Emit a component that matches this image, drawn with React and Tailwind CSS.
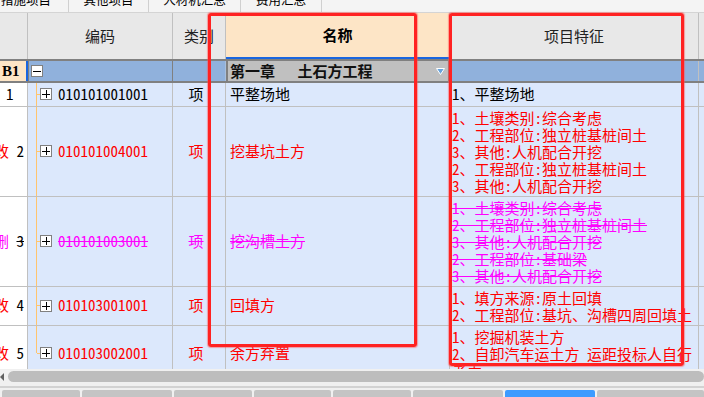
import React from "react";

const FONT = "font-['Noto_Sans_Mono_CJK_SC','Noto_Sans_CJK_SC',sans-serif]";

const TOP_TABS = [
  { label: "措施项目", w: "w-[69px]", cls: "justify-end pr-[17px]" },
  { label: "其他项目", w: "w-[80px]", cls: "justify-center" },
  { label: "人材机汇总", w: "w-[92px]", cls: "justify-center" },
  { label: "费用汇总", w: "w-[81px]", cls: "justify-center" },
];

const BOTTOM_TABS = [
  "w-[78px]", "w-[90px]", "w-[78px]", "w-[77px]", "w-[78px]", "w-[90px]", "w-[90px]", "flex-1",
];

const ROWS = [
  { mark: "", num: "1", code: "010101001001", tone: "normal", name: "平整场地", feats: ["1、平整场地"] },
  {
    mark: "改", num: "2", code: "010101004001", tone: "mod", name: "挖基坑土方",
    feats: [
      "1、土壤类别:综合考虑",
      "2、工程部位:独立桩基桩间土",
      "3、其他:人机配合开挖",
      "2、工程部位:独立桩基桩间土",
      "3、其他:人机配合开挖",
    ],
  },
  {
    mark: "删", num: "3", code: "010101003001", tone: "del", name: "挖沟槽土方",
    feats: [
      "1、土壤类别:综合考虑",
      "2、工程部位:独立桩基桩间土",
      "3、其他:人机配合开挖",
      "2、工程部位:基础梁",
      "3、其他:人机配合开挖",
    ],
  },
  {
    mark: "改", num: "4", code: "010103001001", tone: "mod", name: "回填方",
    feats: ["1、填方来源:原土回填", "2、工程部位:基坑、沟槽四周回填土"],
  },
  {
    mark: "改", num: "5", code: "010103002001", tone: "mod", name: "余方弃置",
    feats: ["1、挖掘机装土方", "2、自卸汽车运土方 运距投标人自行", "考虑"],
  },
];

const TONE = {
  normal: "text-black",
  mod: "text-[#ff0000]",
  del: "text-[#ff00ff] line-through decoration-[#ff00ff]",
};

function Box({ minus }) {
  return (
    <div className="w-[12px] h-[12px] shrink-0 border border-[#808080] bg-white flex items-center justify-center">
      <svg width="8" height="8" viewBox="0 0 8 8">
        <path d="M0 4.5H8" stroke="#000" strokeWidth="1" />
        {!minus && <path d="M4.5 0V8" stroke="#000" strokeWidth="1" />}
      </svg>
    </div>
  );
}

function DataRow({ r, last }) {
  const tone = TONE[r.tone];
  return (
    <div className="flex shrink-0">
      {/* row header */}
      <div
        className={
          "w-[28px] shrink-0 bg-white border-r border-b border-[#c0c0c0] flex items-center overflow-hidden whitespace-nowrap " +
          (r.mark ? "justify-end pr-[3px]" : "pl-[6px]")
        }
      >
        {r.mark && (
          <span className={r.tone === "del" ? "text-[#ff00ff]" : "text-[#ff0000]"}>{r.mark}&nbsp;</span>
        )}
        <span className={r.tone === "del" ? "text-black line-through" : "text-black"}>{r.num}</span>
      </div>
      {/* code */}
      <div className="w-[145px] shrink-0 bg-[#dce8fc] border-r border-b border-[#c0c0c0] flex items-stretch">
        <div className="w-[8px] shrink-0" />
        <div className="w-px shrink-0 flex flex-col">
          <div className={"bg-[#ffc46e] " + (last ? "h-1/2" : "flex-1")} />
        </div>
        <div className="flex items-center">
          <div className="w-[3px] h-px bg-[#ffc46e]" />
          <Box />
          <span className={"ml-[6px] " + tone}>{r.code}</span>
        </div>
      </div>
      {/* type */}
      <div className="w-[53px] shrink-0 bg-[#dce8fc] border-r border-b border-[#c0c0c0] flex items-center justify-center pr-[6px]">
        <span className={tone}>项</span>
      </div>
      {/* name */}
      <div className="w-[224px] shrink-0 bg-[#dce8fc] border-r border-b border-[#c0c0c0] flex items-center pl-[4px]">
        <span className={tone}>{r.name}</span>
      </div>
      {/* features */}
      <div className="w-[249px] shrink-0 bg-[#dce8fc] border-r border-b border-[#c0c0c0] pt-[2px] pb-[2px] pl-[2px] leading-[17px]">
        {r.feats.map((f, i) => (
          <div key={i} className="whitespace-nowrap">
            <span className={tone}>{f}</span>
          </div>
        ))}
      </div>
      <div className="flex-1 bg-[#dce8fc] border-b border-[#c0c0c0]" />
    </div>
  );
}

export default function App() {
  return (
    <div className={"relative w-[704px] h-[397px] overflow-hidden bg-[#f0f0f0] text-[15px] " + FONT}>
      {/* top tabs */}
      <div className="h-[13px] flex bg-[#f4f4f4] border-b border-[#d4d4d4] overflow-hidden text-[12.5px]">
        {TOP_TABS.map((t) => (
          <div key={t.label} className={"h-full flex items-start border-r border-[#d0d0d0] " + t.w + " " + t.cls}>
            <span className="block leading-[13px] -mt-[7px] whitespace-nowrap">{t.label}</span>
          </div>
        ))}
      </div>

      {/* table */}
      <div className="h-[356px] overflow-hidden flex flex-col">
        {/* header */}
        <div className="h-[46px] shrink-0 flex bg-[#e8e8e8] text-[#222]">
          <div className="w-[28px] shrink-0 border-r border-[#c0c0c0]" />
          <div className="w-[145px] shrink-0 border-r border-[#c0c0c0] flex items-center justify-center">编码</div>
          <div className="w-[53px] shrink-0 border-r border-[#c0c0c0] flex items-center justify-center">类别</div>
          <div className="w-[224px] shrink-0 border-r border-[#c0c0c0] bg-[#fde5c6] border-b-2 border-b-[#1a66e0] flex items-center justify-center font-bold text-black">
            名称
          </div>
          <div className="w-[249px] shrink-0 border-r border-[#c0c0c0] flex items-center justify-center">项目特征</div>
          <div className="flex-1" />
        </div>

        {/* B1 row */}
        <div className="h-[24px] shrink-0 flex border-y-2 border-[#808080] bg-[#90b1dc]">
          <div className="w-[28px] shrink-0 bg-[#fde5c6] border-r-2 border-[#1a66e0] flex items-center pl-[2px] font-['Liberation_Serif',serif] font-bold">
            B1
          </div>
          <div className="w-[145px] shrink-0 border-l border-r border-[#808080] flex items-center pl-[2px]">
            <Box minus />
          </div>
          <div className="w-[53px] shrink-0 border-r border-[#a9bfdc]" />
          <div className="w-[224px] shrink-0 bg-[#c0c0c0] border-x-2 border-[#808080] flex items-center pl-[2px] font-bold text-[#111]">
            <span className="whitespace-nowrap">第一章　 土石方工程</span>
            <svg className="ml-auto mr-[3px]" width="9" height="7" viewBox="0 0 9 7">
              <polygon points="0.5,0.5 8.5,0.5 4.5,6.5" fill="#6aa5dc" stroke="#ffffff" strokeWidth="1" />
            </svg>
          </div>
          <div className="w-[249px] shrink-0 border-r border-[#c0c0c0]" />
          <div className="flex-1" />
        </div>

        {ROWS.map((r, i) => (
          <DataRow key={r.num} r={r} last={i === ROWS.length - 1} />
        ))}
      </div>

      {/* horizontal scrollbar */}
      <div className="h-[21px] flex flex-col bg-[#f0f0f0]">
        <div className="h-[2px]" />
        <div className="h-[11px] flex items-center">
          <svg width="4" height="8" viewBox="0 0 4 8" className="shrink-0">
            <polygon points="4,0 4,8 0,4" fill="#606060" />
          </svg>
          <div className="ml-[4px] flex-1 h-full rounded-full bg-[#bdbdbd]" />
        </div>
        <div className="h-[4px]" />
        <div className="h-[2px] bg-[#d2d2d2]" />
      </div>

      {/* bottom tabs */}
      <div className="h-[7px] flex gap-[2px] pl-[2px] items-end">
        {BOTTOM_TABS.map((w, i) => (
          <div key={i} className={"h-[7px] rounded-t-[2px] " + w + (i === 6 ? " bg-[#3d9bff]" : " bg-[#c4c4c4]")} />
        ))}
      </div>

      {/* annotation boxes */}
      <div className="absolute left-[208px] top-[13px] w-[209px] h-[334px] border-[3px] border-[#ff2222] rounded-[3px] shadow-[0_0_1px_1px_rgba(255,80,80,0.5)]" />
      <div className="absolute left-[449px] top-[13px] w-[235px] h-[353px] border-[3px] border-[#ff2222] rounded-[3px] shadow-[0_0_1px_1px_rgba(255,80,80,0.5)]" />
    </div>
  );
}
